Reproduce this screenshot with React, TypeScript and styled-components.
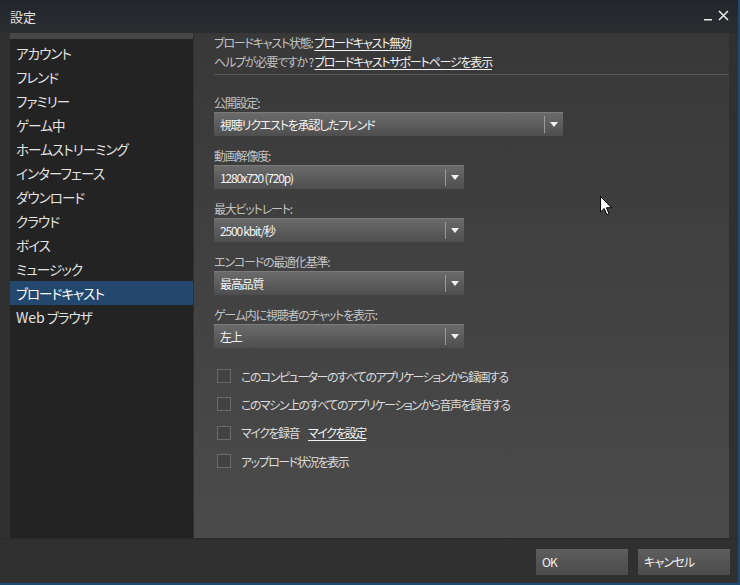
import React from "react";
import styled, { createGlobalStyle } from "styled-components";

const GlobalStyle = createGlobalStyle`
  html, body {
    margin: 0;
    padding: 0;
    background: #2e2e2e;
  }
  body {
    font-family: "Noto Sans CJK JP", "Noto Sans", sans-serif;
    font-feature-settings: "palt";
    -webkit-font-smoothing: antialiased;
  }
`;

const Window = styled.div`
  width: 740px;
  height: 585px;
  box-sizing: border-box;
  display: flex;
  flex-direction: column;
  background: #303030;
  border-right: 2px solid #1d4a70;
  border-bottom: 2px solid #1d4a70;
  position: relative;
  overflow: hidden;
`;

const TitleBar = styled.div`
  height: 33px;
  flex: none;
  display: flex;
  align-items: center;
  justify-content: space-between;
  padding: 0 9px 0 10px;
  background: linear-gradient(#22262c, #2b2d30);
  color: #e2e2e2;
  font-size: 13px;
`;

const Controls = styled.div`
  display: flex;
  align-items: center;
  gap: 5px;
  margin-top: -3px;
`;

const Body = styled.div`
  height: 505px;
  flex: none;
  display: flex;
  gap: 1px;
  padding: 0 9px 0 10px;
`;

const Sidebar = styled.ul`
  width: 183px;
  flex: none;
  margin: 0;
  padding: 2px 0 0;
  list-style: none;
  background: #232323;
  border-top: 6px solid #474747;
`;

const NavItem = styled.li<{ $active?: boolean }>`
  height: 24px;
  line-height: 24px;
  padding-left: 6px;
  font-size: 13.5px;
  letter-spacing: -0.9px;
  color: ${(p) => (p.$active ? "#ffffff" : "#e4e4e4")};
  background: ${(p) => (p.$active ? "#24486d" : "transparent")};
`;

const Latin = styled.span`
  letter-spacing: 0;
  font-size: 14px;
`;

const Content = styled.div`
  flex: 1;
  position: relative;
  padding: 0 0 0 20px;
  background: linear-gradient(#383838, #4b4b4b);
  color: #c2c2c2;
  font-size: 12px;
  letter-spacing: -1.2px;
`;

const InfoLine = styled.div`
  line-height: 19px;
  height: 19px;
  white-space: nowrap;
`;

const Link = styled.span`
  color: #f2f2f2;
  text-decoration: underline;
  text-underline-offset: 2px;
`;

const Divider = styled.div`
  height: 1px;
  margin: 3px 1px 0 0;
  background: #575757;
`;

const Fields = styled.div`
  margin-top: 18px;
  display: flex;
  flex-direction: column;
  gap: 10px;
`;

const Field = styled.div``;

const Label = styled.div`
  height: 19px;
  line-height: 19px;
`;

const Select = styled.div<{ $width: number }>`
  width: ${(p) => p.$width}px;
  height: 24px;
  display: flex;
  align-items: center;
  background: linear-gradient(#6c6c6c, #4e4e4e);
  color: #f4f4f4;
  font-size: 12px;
  box-shadow: inset 0 1px 0 #7a7a7a;
`;

const SelectValue = styled.span`
  flex: 1;
  padding-left: 6px;
  padding-top: 1px;
`;

const SelectArrow = styled.div`
  width: 18px;
  height: 17px;
  border-left: 1px solid #9a9a9a;
  display: flex;
  align-items: center;
  justify-content: center;
`;

const Checks = styled.div`
  margin-top: 14px;
  display: flex;
  flex-direction: column;
`;

const CheckRow = styled.div`
  height: 28.3px;
  display: flex;
  align-items: center;
  gap: 10px;
  padding-left: 3px;
  color: #dcdcdc;
  letter-spacing: -1.5px;
`;

const Box = styled.span`
  width: 14px;
  height: 14px;
  box-sizing: border-box;
  border: 1px solid #6a6a6a;
  background: #424242;
  flex: none;
`;

const SideLink = styled(Link)`
  margin-left: 9px;
`;

const Footer = styled.div`
  flex: 1;
  display: flex;
  justify-content: flex-end;
  align-items: flex-start;
  gap: 10px;
  padding: 10px 8px 0 0;
  border-top: 1px solid #2a2a2a;
`;

const Button = styled.div`
  width: 92px;
  height: 26px;
  line-height: 26px;
  box-sizing: border-box;
  padding-left: 6px;
  background: linear-gradient(#5e5e5e, #4b4b4b);
  color: #f0f0f0;
  font-size: 12px;
  letter-spacing: -0.8px;
`;

const Cursor = styled.svg`
  position: absolute;
  left: 406px;
  top: 163px;
`;

const nav = [
  "アカウント",
  "フレンド",
  "ファミリー",
  "ゲーム中",
  "ホームストリーミング",
  "インターフェース",
  "ダウンロード",
  "クラウド",
  "ボイス",
  "ミュージック",
  "ブロードキャスト",
];

const fields = [
  { label: "公開設定:", value: "視聴リクエストを承認したフレンド", width: 349 },
  { label: "動画解像度:", value: "1280x720 (720p)", width: 250 },
  { label: "最大ビットレート:", value: "2500 kbit/秒", width: 250 },
  { label: "エンコードの最適化基準:", value: "最高品質", width: 250 },
  { label: "ゲーム内に視聴者のチャットを表示:", value: "左上", width: 250 },
];

const Arrow = () => (
  <svg width="8" height="5" viewBox="0 0 8 5">
    <path d="M0 0 H8 L4 5 Z" fill="#f0f0f0" />
  </svg>
);

export default function App() {
  return (
    <Window>
      <GlobalStyle />
      <TitleBar>
        <span>設定</span>
        <Controls>
          <svg width="9" height="12" viewBox="0 0 9 12">
            <rect x="0" y="10" width="8" height="1.5" fill="#e8e8e8" />
          </svg>
          <svg width="11" height="11" viewBox="0 0 11 11">
            <path d="M1 1 L10 10 M10 1 L1 10" stroke="#ececec" strokeWidth="1.5" />
          </svg>
        </Controls>
      </TitleBar>
      <Body>
        <Sidebar>
          {nav.map((n) => (
            <NavItem key={n} $active={n === "ブロードキャスト"}>
              {n}
            </NavItem>
          ))}
          <NavItem>
            <Latin>Web</Latin> ブラウザ
          </NavItem>
        </Sidebar>
        <Content>
          <InfoLine>
            ブロードキャスト状態: <Link>ブロードキャスト無効</Link>
          </InfoLine>
          <InfoLine>
            ヘルプが必要ですか ? <Link>ブロードキャストサポートページを表示</Link>
          </InfoLine>
          <Divider />
          <Fields>
            {fields.map((f) => (
              <Field key={f.label}>
                <Label>{f.label}</Label>
                <Select $width={f.width}>
                  <SelectValue>{f.value}</SelectValue>
                  <SelectArrow>
                    <Arrow />
                  </SelectArrow>
                </Select>
              </Field>
            ))}
          </Fields>
          <Checks>
            <CheckRow>
              <Box />
              このコンピューターのすべてのアプリケーションから録画する
            </CheckRow>
            <CheckRow>
              <Box />
              このマシン上のすべてのアプリケーションから音声を録音する
            </CheckRow>
            <CheckRow>
              <Box />
              <span>
                マイクを録音<SideLink>マイクを設定</SideLink>
              </span>
            </CheckRow>
            <CheckRow>
              <Box />
              アップロード状況を表示
            </CheckRow>
          </Checks>
          <Cursor width="13" height="20" viewBox="0 0 13 20">
            <path
              d="M0.5 0.5 V16 L4.2 12.5 L6.8 18.6 L9 17.7 L6.5 11.7 H11.5 Z"
              fill="#ffffff"
              stroke="#000000"
              strokeWidth="1"
            />
          </Cursor>
        </Content>
      </Body>
      <Footer>
        <Button>OK</Button>
        <Button>キャンセル</Button>
      </Footer>
    </Window>
  );
}
